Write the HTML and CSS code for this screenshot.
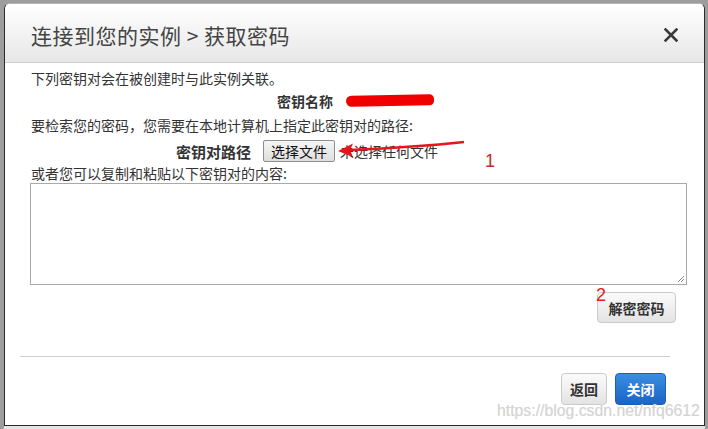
FILE: index.html
```html
<!DOCTYPE html>
<html lang="zh-CN">
<head>
<meta charset="utf-8">
<title>获取密码</title>
<link rel="stylesheet" href="styles.css">
</head>
<body>
<div class="page">
  <div class="dialog">
    <div class="header">
      <h1 class="title">连接到您的实例 &gt; 获取密码</h1>
      <svg class="close" width="14" height="14" viewBox="0 0 14 14"><path d="M1.5 1.5 L12.5 12.5 M12.5 1.5 L1.5 12.5" stroke="#3a3a3a" stroke-width="2.6" stroke-linecap="square"/></svg>
    </div>
    <div class="content">
      <div class="row row1">下列密钥对会在被创建时与此实例关联。</div>
      <div class="row row2"><span class="label">密钥名称</span><span class="scribble"></span></div>
      <div class="row row3">要检索您的密码，您需要在本地计算机上指定此密钥对的路径:</div>
      <div class="row row4"><span class="label">密钥对路径</span><span class="filebtn">选择文件</span><span class="nofile">未选择任何文件</span></div>
      <div class="row row5">或者您可以复制和粘贴以下密钥对的内容:</div>
      <div class="textarea"><svg class="grip" width="8" height="8" viewBox="0 0 8 8"><path d="M7 1 L1 7 M7 4 L4 7" stroke="#888" stroke-width="1"/></svg></div>
    </div>
    <div class="decrypt-row"><span class="btn btn-light decrypt">解密密码</span></div>
    <div class="divider"></div>
    <div class="footer">
      <span class="btn btn-light back">返回</span>
      <span class="btn btn-primary">关闭</span>
    </div>
    <svg class="arrow" width="140" height="20" viewBox="0 0 140 20"><path d="M128 2 C100 5 60 8 14 10" stroke="#e8141b" stroke-width="2.4" fill="none"/><path d="M2 11 L17 3.5 L14 10 L17 17 Z" fill="#e8141b"/></svg>
    <span class="mark mark1">1</span>
    <span class="mark mark2">2</span>
    <span class="watermark">https://blog.csdn.net/nfq6612</span>
  </div>
  <div class="under"></div>
</div>
</body>
</html>
```
FILE: styles.css
```css
html, body {
  margin: 0;
  padding: 0;
}
body {
  width: 708px;
  height: 429px;
  overflow: hidden;
  background: #9d9d9d;
  font-family: "Noto Sans CJK SC", "Liberation Sans", sans-serif;
  color: #333;
}
.page {
  padding: 3px 3px 0 4px;
}
.dialog {
  position: relative;
  box-sizing: border-box;
  width: 701px;
  height: 423px;
  background: #fff;
  border: 1px solid #2a2a2a;
  border-top-color: #b5b5b5;
  border-radius: 6px 6px 0 0;
}
.header {
  box-sizing: border-box;
  height: 59px;
  padding: 3px 26px 0 26px;
  display: flex;
  align-items: center;
  justify-content: space-between;
  background: linear-gradient(#ffffff, #e7e7e7);
  border-bottom: 1px solid #cdcdcd;
  border-radius: 5px 5px 0 0;
}
.title {
  margin: 0;
  font-size: 21px;
  font-weight: normal;
  color: #444;
  letter-spacing: 0.5px;
}
.close {
  display: block;
}
.content {
  padding: 4px 26px 0 26px;
  font-size: 14px;
}
.row {
  display: flex;
  align-items: center;
  white-space: nowrap;
}
.row1 { height: 21px; }
.row2 { height: 25px; padding-left: 246px; }
.row3 { height: 24px; }
.row4 { height: 28px; padding-left: 145px; }
.row5 { height: 16px; }
.label {
  font-weight: bold;
  color: #333;
}
.row4 .label {
  font-size: 15px;
}
.scribble {
  display: inline-block;
  width: 88px;
  height: 11px;
  margin-left: 13px;
  background: #f00000;
  border-radius: 6px 5px 5px 6px;
  transform: rotate(-1deg);
}
.filebtn {
  box-sizing: border-box;
  display: inline-flex;
  align-items: center;
  justify-content: center;
  width: 72px;
  height: 22px;
  margin-left: 12px;
  border: 1px solid #8e8e8e;
  border-radius: 2px;
  background: linear-gradient(#f6f6f6, #dedede);
  font-size: 14px;
  color: #111;
}
.nofile {
  margin-left: 5px;
  color: #333;
}
.textarea {
  position: relative;
  box-sizing: border-box;
  width: 657px;
  height: 102px;
  margin: 2px 0 0 -1px;
  border: 1px solid #a9a9a9;
}
.grip {
  position: absolute;
  right: 1px;
  bottom: 1px;
}
.decrypt-row {
  display: flex;
  justify-content: flex-end;
  padding: 7px 28px 0 0;
}
.btn {
  box-sizing: border-box;
  display: inline-flex;
  align-items: center;
  justify-content: center;
  height: 32px;
  border-radius: 4px;
  font-size: 14px;
  font-weight: bold;
}
.btn-light {
  border: 1px solid #cacaca;
  background: linear-gradient(#fbfbfb, #e3e3e3);
  color: #333;
}
.decrypt {
  width: 79px;
  height: 31px;
}
.divider {
  height: 1px;
  margin: 33px 0 0 15px;
  width: 650px;
  background: #cfcfcf;
}
.footer {
  display: flex;
  justify-content: flex-end;
  gap: 8px;
  padding: 16px 38px 0 0;
}
.back {
  width: 46px;
}
.btn-primary {
  width: 51px;
  border: 1px solid #1b5fb8;
  background: linear-gradient(#3a8ee0, #1a64c6);
  color: #fff;
}
.arrow {
  position: absolute;
  left: 331px;
  top: 136px;
}
.mark {
  position: absolute;
  font-family: "Liberation Sans", sans-serif;
  font-size: 18px;
  color: #e31b1b;
  line-height: 1;
}
.mark1 {
  left: 480px;
  top: 148px;
  color: #c42a2a;
}
.mark2 {
  left: 591px;
  top: 282px;
}
.watermark {
  position: absolute;
  left: 492px;
  top: 398px;
  font-family: "Liberation Sans", sans-serif;
  font-size: 15.8px;
  color: #d4d4d4;
  text-shadow: 0 0 1px #eaeaea;
  white-space: nowrap;
}
.under {
  height: 4px;
  background: #e4e4e4;
}
```
